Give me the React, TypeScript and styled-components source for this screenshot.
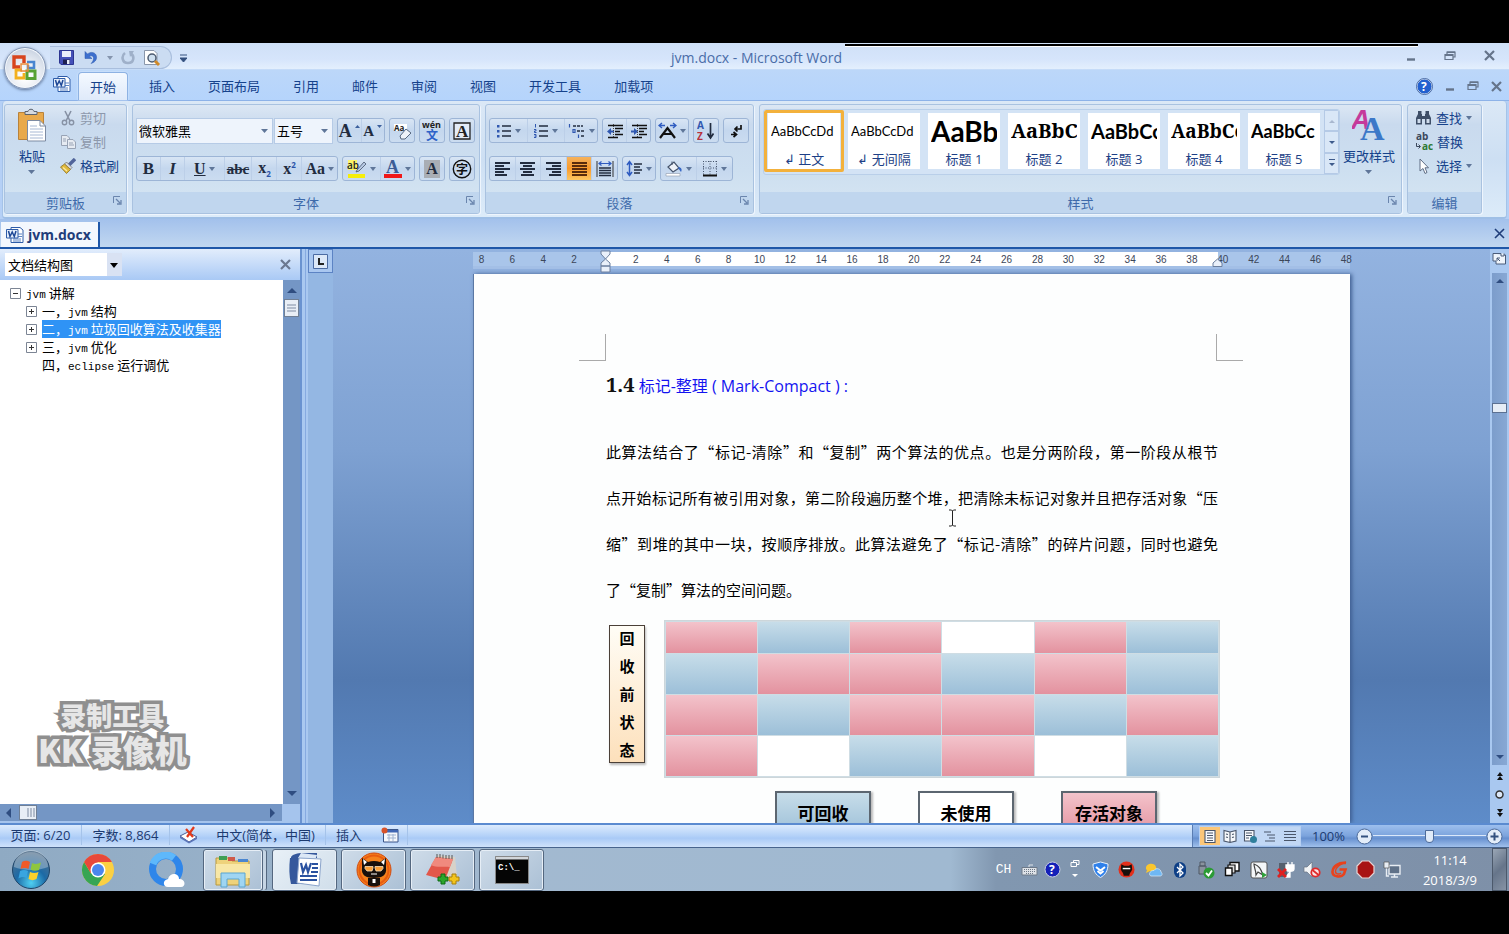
import React from 'react';
import styled, { createGlobalStyle, css } from 'styled-components';

const UI = `'Open Sans', 'Noto Sans CJK SC', sans-serif`;
const SERIF = `'Liberation Serif', 'Noto Sans CJK SC', serif`;

const GlobalStyle = createGlobalStyle`
  * { box-sizing: border-box; }
  body { margin: 0; background: #000; font: 13px/18px ${UI}; color: #15428b; }
  button, select, input { font: inherit; color: inherit; margin: 0; }
  button { border: 0; padding: 0; background: none; cursor: pointer; }
  svg { display: block; flex: none; }
  h1, p { margin: 0; }
`;

const Screen = styled.div`
  display: flex; flex-direction: column; height: 100vh; padding: 43px 0; overflow: hidden;
`;

/* ---------- title bar ---------- */
const TitleBar = styled.header`
  position: relative; display: flex; align-items: center; height: 27px; padding: 2px 10px 0 50px;
  background: linear-gradient(#cfe0f7, #d6e5fb 60%, #e3effd 95%, #b4d0f5);
`;
const TitleText = styled.div`
  flex: 1; text-align: center; color: #4a6da8; padding-right: 88px; font-size: 14px;
`;
const EdgeLine = styled.div`
  position: absolute; top: 1px; left: 56%; right: 6%; height: 3px; background: #000; border-bottom: 1px solid #fff;
`;
const QuickAccess = styled.div`
  display: flex; align-items: center; gap: 8px; width: 122px; height: 23px; padding-left: 8px;
  border: 1px solid #a9bedd; border-left: 0; border-radius: 0 12px 12px 0; background: #cbdcf2;
`;
const Customize = styled.button`margin: 0 8px;`;
const OfficeButton = styled.button`
  position: absolute; left: 4px; top: 4px; z-index: 3; width: 42px; height: 42px; border-radius: 50%;
  display: flex; align-items: center; justify-content: center;
  border: 1px solid #8496b4; background: radial-gradient(circle at 50% 70%, #fff 10%, #dfe5ee 55%, #b9c5d8);
  box-shadow: 0 1px 3px #5e7396, inset 0 0 0 1px #f4f8fd;
`;
const WindowButtons = styled.div`
  display: flex; align-items: center; gap: 28px; padding: 0 4px 4px 0; color: #65748a;
`;

/* ---------- ribbon ---------- */
const TabRow = styled.nav`
  display: flex; align-items: flex-end; gap: 9px; height: 31px; padding: 0 7px 0 53px;
  background: linear-gradient(#bcd7f9, #b5d4fc); border-bottom: 1px solid #8db2e8;
`;
const TabIcon = styled.div`align-self: center; width: 16px; padding-bottom: 2px;`;
const Tab = styled.button<{ $on?: boolean }>`
  height: 28px; padding: 0 12px; color: #15428b; border-radius: 4px 4px 0 0;
  ${p => p.$on && css`background: linear-gradient(#f4f9ff, #dfeafa); border: 1px solid #8db2e3; border-bottom: 0; padding: 0 11px; box-shadow: 0 0 2px #e7f2ff;`}
`;
const TabTools = styled.div`
  display: flex; align-items: center; gap: 12px; margin-left: auto; height: 28px; color: #65748a;
`;
const RibbonWrap = styled.div`padding: 0 2px; background: #b5d0f6;`;
const Ribbon = styled.section`
  display: flex; gap: 5px; height: 118px; padding: 3px 24px 3px 1px;
  background: linear-gradient(#dbe8f6, #cddff3 50%, #dcebf9);
  border: 1px solid #a5c3e8; border-top: 0; border-bottom: 2px solid #9fbfe6; border-radius: 4px;
`;
const Group = styled.div<{ $w?: number }>`
  display: flex; flex-direction: column; ${p => (p.$w ? css`width: ${p.$w}px;` : css`flex: 1;`)}
  min-width: 0; overflow: hidden;
  border: 1px solid #a9c2e0; border-radius: 3px; box-shadow: 1px 1px 0 #eef5fd;
  background: linear-gradient(#dce7f4, #c9daee 18%, #cddff0 60%, #d7e6f3);
`;
const GroupBody = styled.div`display: flex; flex: 1; padding: 0 3px;`;
const GroupLabel = styled.div<{ $plain?: boolean }>`
  display: flex; align-items: center; height: 21px; background: #c0d6ee; color: #3e6aaa;
  span { flex: 1; text-align: center; padding-left: ${p => (p.$plain ? 0 : 13)}px; }
  button { align-self: flex-start; margin: 4px 4px 0 0; }
`;
const BigButton = styled.button`
  display: flex; flex-direction: column; align-items: center; color: #15428b; padding-top: 3px; gap: 5px; white-space: nowrap; margin: 0 auto;
`;
const Stack = styled.div`display: flex; flex-direction: column; gap: 2px; padding: 2px 4px 0;`;
const LineButton = styled.button<{ $off?: boolean }>`
  display: flex; align-items: center; gap: 4px; height: 22px; color: ${p => (p.$off ? '#8d98ab' : '#15428b')}; white-space: nowrap;
`;
const ToolRows = styled.div`display: flex; flex-direction: column; gap: 13px; padding-top: 13px;`;
const ToolRow = styled.div`display: flex; align-items: center; gap: 4px; height: 25px;`;
const Cluster = styled.div<{ $w: number }>`
  display: flex; align-items: stretch; width: ${p => p.$w}px; height: 25px;
  border: 1px solid #9db5d6; border-radius: 3px; background: linear-gradient(#d8e5f4, #c4d7ee 50%, #cbdcf0);
`;
const Tool = styled.button<{ $on?: boolean; $g?: number }>`
  display: flex; align-items: center; justify-content: center; flex: ${p => p.$g ?? 1}; gap: 3px; min-width: 0; color: #222c3f;
  & + & { border-left: 1px solid #bccfe8; }
  ${p => p.$on && css`background: linear-gradient(#f5b25c, #f99a2c 50%, #fdc763);`}
`;
const Glyph = styled.span<{ $size?: number; $bold?: boolean; $italic?: boolean; $line?: string; $bg?: string }>`
  font: ${p => (p.$italic ? 'italic' : 'normal')} ${p => (p.$bold ? 700 : 400)} ${p => p.$size ?? 16}px/18px ${SERIF};
  text-decoration: ${p => p.$line ?? 'none'};
  ${p => p.$bg && css`background: ${p.$bg}; padding: 0 2px;`}
  sub, sup { font: 700 8px/8px ${UI}; color: #2a52a8; }
`;
const SelectWrap = styled.div<{ $w: number }>`
  position: relative; width: ${p => p.$w}px; height: 26px;
  select { appearance: none; width: 100%; height: 100%; padding: 0 2px; border: 1px solid #b6cbe6; background: #eef4fc; color: #000; }
  svg { position: absolute; right: 5px; top: 11px; pointer-events: none; }
`;
const Combos = styled.div`display: flex; gap: 1px;`;

const Gallery = styled.div`
  display: flex; height: 66px; margin: 4px 0 0; background: #d3e3f5; border: 1px solid #b9cfe9; border-radius: 3px; overflow: hidden;
`;
const StyleCell = styled.button<{ $on?: boolean }>`
  width: 80px; height: 62px; padding: 0 4px;
  ${p => p.$on && css`border: 3px solid #f3b13c; padding: 0 1px; border-radius: 2px;`}
`;
const StyleInner = styled.span`
  display: flex; flex-direction: column; justify-content: space-between; height: 56px; background: #fff; overflow: hidden;
`;
const Sample = styled.span<{ $size: number; $bold?: boolean; $serif?: boolean }>`
  display: block; margin: 0 3px; height: 36px; color: #000; white-space: nowrap; overflow: hidden; text-align: left;
  font: ${p => (p.$bold ? 700 : 400)} ${p => p.$size}px/36px ${p => (p.$serif ? `'Noto Serif', 'DejaVu Serif', ${SERIF}` : `Lato, ${UI}`)};
`;
const StyleName = styled.span`display: block; text-align: center; color: #1d3f86; line-height: 20px;`;
const GalleryScroll = styled.div`
  display: flex; flex-direction: column; width: 15px; margin-left: auto;
  button { flex: 1; display: flex; align-items: center; justify-content: center; border: 1px solid #b5cae6; background: #d9e7f7; }
`;

/* ---------- document tabs ---------- */
const DocTabs = styled.div`
  display: flex; align-items: flex-end; justify-content: space-between; height: 30px; padding: 0 4px 0 1px;
  background: linear-gradient(#a3c1ec, #c1d7f0); border-bottom: 2px solid #1f57a8;
`;
const DocTab = styled.button`
  display: flex; align-items: center; gap: 4px; height: 25px; padding: 0 7px 0 5px; background: #f3f7fd;
  border-right: 2px solid #1f57a8; color: #1f3d7a; font: 700 14px/18px ${UI};
`;
const DocClose = styled.button`align-self: center;`;

/* ---------- workspace ---------- */
const Workspace = styled.main`display: flex; flex: 1; min-height: 0;`;
const Pane = styled.aside`position: relative; display: flex; flex-direction: column; width: 300px; background: #fff;`;
const PaneHead = styled.div`
  display: flex; align-items: center; justify-content: space-between; height: 31px; padding: 0 9px 0 5px;
  background: linear-gradient(#e2edfc, #a9c9f5);
`;
const PaneSelect = styled.div`
  position: relative; width: 117px; height: 23px;
  select { appearance: none; width: 100%; height: 100%; border: 0; padding: 0 3px; background: linear-gradient(90deg, #fff 102px, #d9e2f3 102px); color: #000; }
  svg { position: absolute; right: 4px; top: 10px; pointer-events: none; }
`;
const PaneRow = styled.div`display: flex; flex: 1; min-height: 0;`;
const Tree = styled.ul`
  flex: 1; margin: 0; padding: 4px 0 0 10px; list-style: none; color: #000; white-space: nowrap;
  font: 13px/18px 'Noto Sans CJK SC', sans-serif;
`;
const TreeItem = styled.li<{ $level: number }>`
  display: flex; align-items: center; gap: 5px; height: 18px; padding-left: ${p => (p.$level ? 16 : 0)}px;
`;
const TreeText = styled.span<{ $on?: boolean; $leaf?: boolean }>`
  height: 18px;
  ${p => p.$on && css`background: #2f93f5; color: #fff;`}
  ${p => p.$leaf && css`margin-left: 16px;`}
  i { font: 11px/16px 'Liberation Mono', monospace; }
`;
const ScrollV = styled.div`
  display: flex; flex-direction: column; align-items: center; width: 17px; padding: 8px 0; background: #7496c5;
`;
const ScrollThumb = styled.div`
  width: 15px; height: 18px; margin: 6px 0 auto; border: 1px solid #6f7f95; background: #e8eef6;
  display: flex; align-items: center; justify-content: center;
`;
const ScrollH = styled.div`
  display: flex; align-items: center; gap: 8px; height: 17px; margin-right: 18px; padding: 0 7px 0 6px; background: #7496c5;
  svg:last-child { margin-left: auto; }
`;
const PaneFoot = styled.div`background: #a5c4ed; height: 19px;`;
const ThumbH = styled.div`
  width: 18px; height: 15px; border: 1px solid #6f7f95; background: #e8eef6; display: flex; align-items: center; justify-content: center;
`;
const Watermark = styled.div`
  position: absolute; left: 38px; bottom: 56px; text-align: center; color: #e6e6e6;
  font: 900 26px/32px 'Noto Sans CJK SC', sans-serif; -webkit-text-stroke: 7px #8f8f8f; paint-order: stroke fill;
  strong { display: block; font: 900 32px/36px 'Noto Sans CJK SC', sans-serif; }
`;
const Splitter = styled.div`
  width: 8px; background: linear-gradient(90deg, #6a93d0 0 2px, #a9c8f0 2px 5px, #86aae0 5px 6px, #a9c8f0 6px);
`;
const RulerV = styled.div`width: 25px; background: #94b7e3; `;
const TabStop = styled.button`
  width: 25px; height: 24px; border: 1px solid #5c83c4; background: #a9c7f0; display: flex; align-items: center; justify-content: center;
`;
const Canvas = styled.div`
  flex: 1; min-width: 0; display: flex; flex-direction: column; align-items: center; overflow: hidden;
  background: linear-gradient(#93b3e0, #7ea1d2 35%, #5279b0 75%, #5e8cc9);
`;
const Ruler = styled.div`
  position: relative; flex: none; display: flex; width: 877px; height: 17px; margin: 3px 0 5px;
  border-bottom: 3px solid #a3bfe6; background: #a9c5ea;
`;
const RulerLive = styled.div`flex: 1; margin: 0 132px; background: #fff;`;
const RulerNumbers = styled.div`
  position: absolute; left: -7px; right: -12px; top: 0; display: flex; font: 10px/16px 'Liberation Sans', sans-serif; color: #3c4658;
  span { flex: 1; text-align: center; }
`;
const Marker = styled.div<{ $right?: boolean }>`
  position: absolute; z-index: 1; top: ${p => (p.$right ? 6 : -2)}px; ${p => (p.$right ? 'right: 127px;' : 'left: 127px;')}
`;
const Page = styled.article`
  position: relative; flex: 1; min-height: 0; width: 877px; padding: 60px 126px 0 132px; background: #fdfefe; border-left: 1px solid #5b78a4;
  box-shadow: 2px 0 4px #3f5f92; overflow: hidden; color: #000;
`;
const Corner = styled.div<{ $right?: boolean }>`
  width: 27px; height: 27px; border-bottom: 1px solid #aaa; ${p => (p.$right ? 'border-left' : 'border-right')}: 1px solid #aaa;
`;
const Corners = styled.div`display: flex; justify-content: space-between; margin: 0 -19px 0 -27px;`;
const Heading = styled.h1`
  margin: 9px 0 29px; height: 30px; color: #1414f0; font: 400 16px/30px ${UI};
  b { font: 700 20px/30px 'Noto Serif', 'DejaVu Serif', 'Liberation Serif', serif; color: #111; }
`;
const Paragraph = styled.p`
  width: 612px; font: 15px/46px 'Noto Sans CJK SC', sans-serif; white-space: nowrap;
  span { display: block; text-align-last: justify; }
  span:last-child { text-align-last: start; }
`;
const Caret = styled.div`position: absolute; left: 474px; top: 235px;`;
const Figure = styled.div`display: flex; gap: 19px; align-items: flex-start; padding: 0 4px 0 3px; margin-top: 7px;`;
const SideLabel = styled.div`
  width: 36px; height: 138px; margin-top: 5px; border: 1px solid #4b4038; background: linear-gradient(#fffdf6, #fde0bb);
  display: grid; place-content: center;
  box-shadow: 1px 2px 2px #bbb; font: 700 15px/28px 'Noto Sans CJK SC', sans-serif; text-align: center;
`;
const Heap = styled.div`
  flex: 1; display: grid; grid-template-columns: repeat(6, 1fr); grid-template-rows: 31px 40px 40px 40px; gap: 1px; padding: 1px;
  border: 1px solid #cdd6da; background: #cfdde4;
`;
type Kind = 'r' | 'b' | 'w';
const fills: Record<Kind, string> = {
  r: 'linear-gradient(#f3c3cb, #e3929f)',
  b: 'linear-gradient(#c7dde9, #9cbfd8)',
  w: '#fff',
};
const HeapCell = styled.div<{ $k: Kind }>`background: ${p => fills[p.$k]};`;
const Legend = styled.div`display: flex; gap: 47px; padding-left: 169px; margin-top: 13px;`;
const LegendBox = styled.div<{ $k: Kind }>`
  width: 96px; height: 46px; border: 2px solid #5c6670; background: ${p => fills[p.$k]}; box-shadow: 2px 1px 2px #bbb;
  text-align: center; white-space: nowrap; font: 700 17px/40px 'Noto Sans CJK SC', sans-serif;
`;
const DocScroll = styled.div`
  display: flex; flex-direction: column; width: 19px; background: #a9c8f0; align-items: center;
`;
const DocTrack = styled.div`
  flex: 1; width: 15px; display: flex; flex-direction: column; align-items: center; background: linear-gradient(90deg, #7c9dcb, #88a8d4); padding: 6px 0;
`;
const DocThumb = styled.div`width: 15px; height: 10px; margin: 120px 0 auto; border: 1px solid #5c7192; background: #e6edf6;`;
const ToggleRuler = styled.button`height: 18px; margin-bottom: 6px;`;
const Browse = styled.div`display: flex; flex-direction: column; align-items: center; gap: 9px; padding: 7px 0 6px;`;

/* ---------- status bar ---------- */
const StatusBar = styled.footer`
  display: flex; height: 25px; color: #1c3a70; border-top: 2px solid #5b8bd0;
  background: linear-gradient(#dcebfd, #b3d1f8 50%, #a9caf6 60%, #cfe2fb); border-bottom: 1px solid #47648d;
`;
const StatusItem = styled.button<{ $w: number }>`
  display: flex; align-items: center; justify-content: center; width: ${p => p.$w}px; height: 20px; color: #1c3a70; white-space: nowrap;
  border-right: 1px solid #a5c3ea;
`;
const StatusPlain = styled(StatusItem)`border: 0;`;
const StatusRight = styled.div`
  display: flex; align-items: center; margin-left: auto; padding-left: 6px; gap: 11px; border-left: 1px solid #5a7db2;
  background: linear-gradient(#9dbfee, #7ba3dc 50%, #6690cf 60%, #a0c0ec);
`;
const Views = styled.div`display: flex; height: 20px; border: 1px solid #b7d0f2; background: #c1d7f4;`;
const ViewButton = styled.button<{ $on?: boolean }>`
  width: 20px; display: flex; align-items: center; justify-content: center; ${p => p.$on && css`background: #fbc678;`}
`;
const Zoom = styled.div`display: flex; align-items: center; padding-right: 6px;`;
const Slider = styled.input`
  appearance: none; width: 113px; height: 18px; background: linear-gradient(transparent 8px, #dbe8fa 8px 9px, transparent 9px);
  &::-webkit-slider-thumb { appearance: none; width: 9px; height: 13px; background: #dfeaf8; border: 1px solid #4d6b9a; border-radius: 1px 1px 5px 5px; }
`;

/* ---------- taskbar ---------- */
const TaskBar = styled.footer`
  display: flex; align-items: stretch; height: 43px; padding: 0 2px 0 4px; color: #fff;
  background: linear-gradient(90deg, #8faac3, #a2b9d0 35%, #a0b9d1 63%, #8197b0 66%, #7e90a8);
`;
const Pinned = styled.button<{ $w: number }>`width: ${p => p.$w}px; display: flex; align-items: center; justify-content: center;`;
const TaskTile = styled.button<{ $stack?: boolean; $hot?: boolean }>`
  width: ${p => (p.$stack ? 60 : 65)}px; margin: ${p => (p.$stack ? '1px 9px 0 7px' : '1px 4px 0 0')}; display: flex; align-items: center; justify-content: center;
  border: 1px solid #54677f; border-radius: 3px;
  background: ${p => (p.$hot ? 'linear-gradient(135deg, #e8f0f7, #d0deea)' : 'linear-gradient(135deg, #cfdce9, #abc0d5)')};
  box-shadow: inset 0 0 0 1px #e6eef6 ${p => (p.$stack ? ', 4px 0 0 -1px #c6d5e4, 5px 0 0 -1px #54677f' : '')};
`;
const Tray = styled.div`display: flex; align-items: center; margin-left: auto;`;
const TrayIcons = styled.div`display: flex; width: 318px; button { flex: 1; }`;
const TrayItem = styled.button<{ $w?: number }>`
  width: ${p => p.$w ?? 27}px; display: flex; justify-content: center; align-items: center; color: #fff; font: 13px/16px 'Liberation Mono', monospace;
`;
const Clock = styled.div`width: 82px; text-align: center; line-height: 20px; margin-left: 4px;`;
const ShowDesktop = styled.button`
  width: 15px; margin-left: 1px; border: 1px solid #4c596b; background: linear-gradient(135deg, #9aa6b5, #66758a 50%, #8693a5);
`;

/* ---------- icons ---------- */
type P = { w: number; h: number; children: React.ReactNode; vb?: string };
const Svg = ({ w, h, children, vb }: P) => (
  <svg width={w} height={h} viewBox={vb ?? `0 0 ${w} ${h}`} fill="none" aria-hidden="true">{children}</svg>
);
const Drop = ({ c = '#5f7699', w = 7, h = 4 }: { c?: string; w?: number; h?: number }) => (
  <Svg w={w} h={h}><path d={`M0 0H${w}L${w / 2} ${h}Z`} fill={c} /></Svg>
);
const Tri = ({ d, c = '#3e5b8c' }: { d: string; c?: string }) => <Svg w={10} h={10}><path d={d} fill={c} /></Svg>;
const CloseX = ({ s = 11, c = 'currentColor' }) => (
  <Svg w={s} h={s} vb="0 0 11 11"><path d="M1 1L10 10M10 1L1 10" stroke={c} strokeWidth="2.2" /></Svg>
);
const Minimize = () => <Svg w={10} h={10}><path d="M1 8.500H9" stroke="currentColor" strokeWidth="2.4" /></Svg>;
const Restore = () => (
  <Svg w={12} h={10}><path d="M3 3V1H11V6H9M1 3.500H9V8.500H1Z" stroke="currentColor" strokeWidth="1.2" /><path d="M1 3H9V5H1ZM3 0.500H11V2H3Z" fill="currentColor" /></Svg>
);
const Launcher = () => (
  <Svg w={9} h={9}><path d="M.5 7V.5H7" stroke="#6a85ad" /><path d="M3 3L7 7M8 4V8H4" stroke="#6a85ad" strokeWidth="1.3" /></Svg>
);
const WordDoc = () => (
  <Svg w={18} h={18}>
    <path d="M5 1.500H14L17 4V16.500H5Z" fill="#fff" stroke="#2e5ca8" /><path d="M12 8H16M12 10.500H16M7 13H15M7 15H15" stroke="#5a83c4" />
    <path d="M.5 3.500H12V12H.5Z" fill="#e6effb" stroke="#2e5ca8" /><path d="M2.500 5L4 10.500L6.200 6L8.300 10.500L10 5" stroke="#1d4796" strokeWidth="1.500" />
  </Svg>
);
const OfficeLogo = () => (
  <Svg w={28} h={28}>
    <path d="M13 9V3H3V13H9" stroke="#d8441c" strokeWidth="3.400" /><path d="M16 8H23V14H17V11" stroke="#4a86d0" strokeWidth="2.600" />
    <path d="M11 16H5V24H13V19" stroke="#f3b01e" strokeWidth="2.800" /><path d="M16 17H24V24.500H16Z" stroke="#58a234" strokeWidth="3" />
    <path d="M10 10H17V17H10Z" stroke="#e98b3a" strokeWidth="1.400" />
  </Svg>
);
const Save = () => (
  <Svg w={17} h={17}><path d="M1.500 1.500H15.500V15.500H3L1.500 14Z" fill="#4450b8" stroke="#2c3590" /><path d="M4 2H13V8H4Z" fill="#e9edfa" /><path d="M5 10.500H12V15H5Z" fill="#1e2050" /><path d="M9 11H11.500V15H9Z" fill="#e9edfa" /></Svg>
);
const Undo = () => (
  <Svg w={16} h={16}><path d="M2 1.500V8.500H9L6.500 6.200C9 5 11 6.500 10.500 9C10.300 10.500 9.500 12 8 13.500C11.500 12.500 14 10 13.500 6.500C13 2.500 8 1 4.500 4Z" fill="#3d6fce" stroke="#2b57ab" strokeWidth=".5" /></Svg>
);
const Redo = () => (
  <Svg w={14} h={15}><path d="M4 3C0 6 1 13 7 13C13 13 14 6 9.500 3.500" stroke="#9fb0c9" strokeWidth="2.600" /><path d="M8 1H13L9 7Z" fill="#9fb0c9" /></Svg>
);
const Preview = () => (
  <Svg w={18} h={18}><path d="M1.500 1.500H11L14 4.500V15.500H1.500Z" fill="#fff" stroke="#8a97ab" /><circle cx="9" cy="9" r="4" fill="#cfe0f0" stroke="#4c5b70" strokeWidth="1.500" /><path d="M12 12L16 16" stroke="#d08a2a" strokeWidth="3" /></Svg>
);
const Paste = () => (
  <Svg w={30} h={34}>
    <path d="M1.500 4.500H26.500V31.500H1.500Z" fill="#e9a94a" stroke="#b9823a" /><path d="M8 6.500V3.500H11C11.500.5 16.500.5 17 3.500H20V6.500Z" fill="#d5d9df" stroke="#5c6470" />
    <path d="M10.500 12.500H23L28.500 18V33H10.500Z" fill="#fff" stroke="#7d8ba3" /><path d="M23 12.500V18H28.500" stroke="#7d8ba3" /><path d="M13 18H20M13 21H26M13 24H26M13 27H26M13 30H26" stroke="#a7b8d4" />
  </Svg>
);
const Cut = () => <Svg w={16} h={16}><path d="M5 1L10 11M11 1L6 11" stroke="#8792a5" strokeWidth="1.600" /><circle cx="4.500" cy="12.500" r="2.200" stroke="#8792a5" strokeWidth="1.400" /><circle cx="11.500" cy="12.500" r="2.200" stroke="#8792a5" strokeWidth="1.400" /></Svg>;
const Copy = () => <Svg w={16} h={16}><path d="M1.500 1.500H7L9.500 4V11.500H1.500Z" fill="#e6ebf2" stroke="#98a3b5" /><path d="M7.500 5.500H13L15.500 8V14.500H7.500Z" fill="#e6ebf2" stroke="#98a3b5" /><path d="M3 5H6M3 7H6M9 9H13M9 11H14" stroke="#98a3b5" /></Svg>;
const Brush = () => <Svg w={16} h={16}><path d="M15 1L9 7" stroke="#51659a" strokeWidth="3.400" /><path d="M6.500 4L12 9.500L10 11.500L4.500 6Z" fill="#d7d9de" stroke="#666" strokeWidth=".7" /><path d="M4.500 6L10.500 11.500L6.500 15.500L.5 9Z" fill="#e0b93c" stroke="#8f7222" strokeWidth=".8" /><path d="M3 9.500L7 13" stroke="#fbe9a0" strokeWidth="1.400" /></Svg>;
const Eraser = () => (
  <Svg w={19} h={18}><path d="M1 2H14V9H1Z" fill="#fff" /><text x="1" y="9" fontSize="8" fontWeight="700" fill="#222" fontFamily="Open Sans">Aa</text><path d="M13 7L18 11L12 17H8L7 14Z" fill="#eef3fa" stroke="#56677f" /></Svg>
);
const Pinyin = () => (
  <Svg w={20} h={22}><text x="0" y="8" fontSize="9" fontWeight="700" fill="#222" fontFamily="Open Sans">wén</text><text x="4" y="20" fontSize="12" fontWeight="700" fill="#2e62c8" fontFamily="Noto Sans CJK SC">文</text></Svg>
);
const Bullets = () => <Svg w={16} h={16}><path d="M6 3H15M6 8H15M6 13H15" stroke="#222c3f" strokeWidth="1.500" /><path d="M1 2H3.500V4.500H1ZM1 7H3.500V9.500H1ZM1 12H3.500V14.500H1Z" fill="#3058b0" /></Svg>;
const Numbers = () => <Svg w={16} h={16}><path d="M6 3H15M6 8H15M6 13H15" stroke="#222c3f" strokeWidth="1.500" /><path d="M2.500 1V4.500M1 6.500H3V8H1.500V9.500H3.500M1 11.500H3V14.500H1M1.500 13H3" stroke="#3058b0" /></Svg>;
const Multi = () => <Svg w={18} h={16}><path d="M5 3H15M9 8H16M13 13H17" stroke="#222c3f" strokeWidth="1.500" strokeDasharray="3 1" /><path d="M1.500 1V4.500M5 6.500H7V9.500H5ZM10.500 11.500V15" stroke="#3058b0" strokeWidth="1.200" /></Svg>;
const Indent = ({ r }: { r?: boolean }) => (
  <Svg w={18} h={16}><path d="M2 2.500H17M9 5.500H17M9 8.500H14M9 11.500H17M2 14.500H12" stroke="#111" strokeWidth="1.700" /><path d={r ? 'M1 7.500H4V5L8 8.500L4 12V9.500H1Z' : 'M8 7.500H5V5L1 8.500L5 12V9.500H8Z'} fill="#3058b0" /><path d="M7.500 1V15" stroke="#444" strokeDasharray="1 1" /></Svg>
);
const AsianLayout = () => <Svg w={19} h={17}><path d="M2 16L9.500 6L17 16M5 12H14" stroke="#111" strokeWidth="2.200" /><path d="M1 3.500H7M12 3.500H18M4 1L1 3.500L4 6M15 1L18 3.500L15 6" stroke="#2e5bc0" strokeWidth="1.400" /></Svg>;
const Sort = () => <Svg w={18} h={20}><text x="0" y="8" fontSize="10" fontWeight="700" fill="#3058b0" fontFamily="Open Sans">A</text><text x="0" y="19" fontSize="10" fontWeight="700" fill="#b8323c" fontFamily="Open Sans">Z</text><path d="M13.500 2V16M10.500 12.500L13.500 17L16.500 12.500" stroke="#222c3f" strokeWidth="1.700" /></Svg>;
const Marks = () => <Svg w={15} h={16}><path d="M12 2V6H6M8.500 3.500L6 6L8.500 8.500M2 11.500H7M4.500 9L7.500 11.500L4.500 14" stroke="#111" strokeWidth="1.700" /></Svg>;
const aligns: Record<string, string> = {
  l: 'M1 2H16M1 5H10M1 8H16M1 11H10M1 14H13', c: 'M1 2H16M4 5H13M1 8H16M4 11H13M2 14H15',
  r: 'M1 2H16M7 5H16M1 8H16M7 11H16M4 14H16', j: 'M1 2H16M1 5H16M1 8H16M1 11H16M1 14H16',
};
const Align = ({ k }: { k: string }) => <Svg w={17} h={16}><path d={aligns[k]} stroke={k === 'j' ? '#5a2c0c' : '#222c3f'} strokeWidth="1.800" /></Svg>;
const Distribute = () => <Svg w={18} h={18}><path d="M1 1V17M17 1V17" stroke="#333" /><path d="M3 3.500H15M5.500 1.500L3 3.500L5.500 5.500M12.500 1.500L15 3.500L12.500 5.500" stroke="#2e5bc0" strokeWidth="1.200" /><path d="M3 8H15M3 10.500H15M3 13H15M3 15.500H15" stroke="#222c3f" strokeWidth="1.500" /></Svg>;
const Spacing = () => <Svg w={17} h={17}><path d="M3.500 2V15M1 5L3.500 1.500L6 5M1 12L3.500 15.500L6 12" stroke="#2e5bc0" strokeWidth="1.500" /><path d="M8 4H16M8 7H14M8 10H16M8 13H14" stroke="#222c3f" strokeWidth="1.500" /></Svg>;
const Bucket = () => <Svg w={18} h={17}><path d="M3 7L9 2L14 8L8 12Z" fill="#eef2f8" stroke="#44536b" strokeWidth="1.200" /><path d="M7 5V1.500" stroke="#44536b" /><path d="M14 7C17 8 17 10 16 12L13 8Z" fill="#3566c4" /><path d="M1 13.500H15V16H1Z" fill="#fff" stroke="#98a3b5" strokeWidth=".7" /></Svg>;
const Borders = () => <Svg w={16} h={17}><path d="M1.500 1V15M14.500 1V15M8 1V15M1 1.500H15M1 8H15" stroke="#44536b" strokeDasharray="1 1.500" /><path d="M1 15.500H15" stroke="#111" strokeWidth="2" /></Svg>;
const Highlighter = () => <Svg w={20} h={20}><path d="M1 1H10V11H1Z" fill="#fdf66a" /><text x="0" y="10" fontSize="10" fontWeight="600" fill="#222" fontFamily="Open Sans">ab</text><path d="M17 3L10 11L9 13L12 12L19 5Z" fill="#b7c9e3" stroke="#44536b" strokeWidth=".8" /><path d="M1 15H18V19H1Z" fill="#f6ee0a" /></Svg>;
const Enclosed = () => <Svg w={20} h={20}><circle cx="10" cy="10" r="8.700" stroke="#111" strokeWidth="1.400" /><text x="4" y="14.500" fontSize="12" fontWeight="700" fill="#111" fontFamily="Noto Sans CJK SC">字</text></Svg>;
const ChangeStyles = () => <Svg w={34} h={34}><text x="-1" y="21" fontSize="27" fontStyle="italic" fontWeight="700" fill="#c53a9b" fontFamily="Liberation Sans">A</text><text x="8" y="32" fontSize="34" fontWeight="700" fill="#3c78c8" fontFamily="Liberation Serif">A</text></Svg>;
const Binoculars = () => <Svg w={17} h={16}><path d="M3 1H6.500V4H3ZM10.500 1H14V4H10.500ZM1 8L3 4H7V14.500H1ZM16 8L14 4H10V14.500H16Z" fill="#3f4f68" /><path d="M7 6H10V9H7Z" fill="#3f4f68" /><path d="M2.500 9H5.500V13H2.500ZM11.500 9H14.500V13H11.500Z" fill="#cfdcec" /></Svg>;
const Replace = () => <Svg w={18} h={20}><text x="1" y="8" fontSize="10" fontWeight="700" fill="#3b485c" fontFamily="Open Sans">ab</text><text x="7" y="18" fontSize="10" fontWeight="700" fill="#2e7a34" fontFamily="Open Sans">ac</text><path d="M1.500 11V14.500H5M3.500 12.500L5.500 14.500L3.500 16.500" stroke="#3b485c" /></Svg>;
const Arrow = () => <Svg w={17} h={17}><path d="M5 1V13L8 10.500L10 15.500L12 14.500L10 9.800H13.500Z" fill="#fff" stroke="#5e6d85" /></Svg>;
const Expander = ({ open }: { open?: boolean }) => <Svg w={11} h={11}><path d="M.5.5H10.500V10.500H.5Z" fill="#fff" stroke="#7c8594" /><path d={open ? 'M3 5.500H8' : 'M3 5.500H8M5.500 3V8'} stroke="#333" /></Svg>;
const Help = ({ s = 17 }) => <Svg w={s} h={s} vb="0 0 17 17"><circle cx="8.500" cy="8.500" r="7.500" fill="#2260cf" stroke="#d6e4f8" /><circle cx="8.500" cy="8.500" r="8" stroke="#4b6ba3" /><text x="5" y="13" fontSize="12" fontWeight="700" fill="#fff" fontFamily="Open Sans">?</text></Svg>;

/* ---------- data ---------- */
const tabs = ['开始', '插入', '页面布局', '引用', '邮件', '审阅', '视图', '开发工具', '加载项'];
const styleList: [string, string, number, boolean, boolean][] = [
  ['AaBbCcDd', '↲ 正文', 13, false, false], ['AaBbCcDd', '↲ 无间隔', 13, false, false], ['AaBb', '标题 1', 28, true, false],
  ['AaBbC', '标题 2', 20, true, true], ['AaBbCc', '标题 3', 20, true, false], ['AaBbCc', '标题 4', 19, true, true], ['AaBbCc', '标题 5', 18, true, false],
];
const tree = [
  { l: 0, a: '', m: 'jvm', b: ' 讲解', open: true },
  { l: 1, a: '一，', m: 'jvm', b: ' 结构' },
  { l: 1, a: '二，', m: 'jvm', b: ' 垃圾回收算法及收集器', on: true },
  { l: 1, a: '三，', m: 'jvm', b: ' 优化' },
  { l: 1, a: '四，', m: 'eclipse', b: ' 运行调优', leaf: true },
];
const rulerNumbers = [8, 6, 4, 2, '', ...Array.from({ length: 24 }, (_, i) => (i + 1) * 2)];
const heap = 'rbrwrb' + 'brrbrb' + 'rbrrbr' + 'rwbrwb';

const GroupFoot = ({ t, plain }: { t: string; plain?: boolean }) => (
  <GroupLabel $plain={plain}><span>{t}</span>{!plain && <button aria-label={`${t}设置`}><Launcher /></button>}</GroupLabel>
);

const RibbonBar = () => (
  <RibbonWrap>
    <Ribbon>
      <Group $w={123}>
        <GroupBody>
          <BigButton><Paste />粘贴<Drop /></BigButton>
          <Stack>
            <LineButton $off><Cut />剪切</LineButton>
            <LineButton $off><Copy />复制</LineButton>
            <LineButton><Brush />格式刷</LineButton>
          </Stack>
        </GroupBody>
        <GroupFoot t="剪贴板" />
      </Group>
      <Group $w={348}>
        <GroupBody>
          <ToolRows>
            <ToolRow>
              <Combos>
                <SelectWrap $w={137}><select aria-label="字体"><option>微软雅黑</option></select><Drop /></SelectWrap>
                <SelectWrap $w={59}><select aria-label="字号"><option>五号</option></select><Drop /></SelectWrap>
              </Combos>
              <Cluster $w={48}>
                <Tool aria-label="增大字体"><Glyph $bold $size={18}>A</Glyph><Svg w={5} h={12}><path d="M0 3L2.500 0L5 3Z" fill="#3b5f9c" /></Svg></Tool>
                <Tool aria-label="缩小字体"><Glyph $bold $size={15}>A</Glyph><Svg w={5} h={12}><path d="M0 0L2.500 3L5 0Z" fill="#3b5f9c" /></Svg></Tool>
              </Cluster>
              <Cluster $w={26}><Tool aria-label="清除格式"><Eraser /></Tool></Cluster>
              <Cluster $w={26}><Tool aria-label="拼音指南"><Pinyin /></Tool></Cluster>
              <Cluster $w={26}><Tool aria-label="字符边框"><Svg w={18} h={18}><path d="M1 1H17V17H1Z" fill="#e3ebf6" stroke="#222" strokeWidth="1.300" /><text x="3" y="15" fontSize="17" fontWeight="700" fill="#222" fontFamily="Liberation Serif">A</text></Svg></Tool></Cluster>
            </ToolRow>
            <ToolRow>
              <Cluster $w={202}>
                <Tool $g={24}><Glyph $bold $size={17}>B</Glyph></Tool>
                <Tool $g={24}><Glyph $bold $italic $size={17}>I</Glyph></Tool>
                <Tool $g={40}><Glyph $bold $line="underline">U</Glyph><Drop w={6} /></Tool>
                <Tool $g={28}><Glyph $bold $size={15} $line="line-through">abc</Glyph></Tool>
                <Tool $g={25}><Glyph $bold>x<sub>2</sub></Glyph></Tool>
                <Tool $g={25}><Glyph $bold>x<sup>2</sup></Glyph></Tool>
                <Tool $g={36}><Glyph $bold>Aa</Glyph><Drop w={6} /></Tool>
              </Cluster>
              <Cluster $w={73}>
                <Tool $g={39}><Highlighter /><Drop w={6} /></Tool>
                <Tool $g={35}><Svg w={18} h={20}><text x="2" y="14" fontSize="18" fontWeight="700" fill="#3c5c96" fontFamily="Liberation Serif">A</text><path d="M0 15H18V19H0Z" fill="#f01818" /></Svg><Drop w={6} /></Tool>
              </Cluster>
              <Cluster $w={26}><Tool aria-label="字符底纹"><Glyph $bold $bg="#a9aeb5">A</Glyph></Tool></Cluster>
              <Cluster $w={26}><Tool aria-label="带圈字符"><Enclosed /></Tool></Cluster>
            </ToolRow>
          </ToolRows>
        </GroupBody>
        <GroupFoot t="字体" />
      </Group>
      <Group $w={269}>
        <GroupBody>
          <ToolRows>
            <ToolRow>
              <Cluster $w={109}>
                <Tool $g={38} aria-label="项目符号"><Bullets /><Drop w={6} /></Tool>
                <Tool $g={38} aria-label="编号"><Numbers /><Drop w={6} /></Tool>
                <Tool $g={33} aria-label="多级列表"><Multi /><Drop w={6} /></Tool>
              </Cluster>
              <Cluster $w={49}><Tool aria-label="减少缩进"><Indent /></Tool><Tool aria-label="增加缩进"><Indent r /></Tool></Cluster>
              <Cluster $w={34}><Tool aria-label="中文版式"><AsianLayout /><Drop w={6} /></Tool></Cluster>
              <Cluster $w={26}><Tool aria-label="排序"><Sort /></Tool></Cluster>
              <Cluster $w={26}><Tool aria-label="显示标记"><Marks /></Tool></Cluster>
            </ToolRow>
            <ToolRow>
              <Cluster $w={129}>
                <Tool aria-label="左对齐"><Align k="l" /></Tool><Tool aria-label="居中"><Align k="c" /></Tool><Tool aria-label="右对齐"><Align k="r" /></Tool>
                <Tool $on aria-label="两端对齐"><Align k="j" /></Tool><Tool aria-label="分散对齐"><Distribute /></Tool>
              </Cluster>
              <Cluster $w={34}><Tool aria-label="行距"><Spacing /><Drop w={6} /></Tool></Cluster>
              <Cluster $w={73}><Tool aria-label="底纹"><Bucket /><Drop w={6} /></Tool><Tool aria-label="边框"><Borders /><Drop w={6} /></Tool></Cluster>
            </ToolRow>
          </ToolRows>
        </GroupBody>
        <GroupFoot t="段落" />
      </Group>
      <Group>
        <GroupBody>
          <Gallery>
            {styleList.map(([s, n, size, bold, serif], i) => (
              <StyleCell key={n} $on={i === 0}>
                <StyleInner>
                  <Sample $size={size} $bold={bold} $serif={serif}>{s}</Sample>
                  <StyleName>{n}</StyleName>
                </StyleInner>
              </StyleCell>
            ))}
            <GalleryScroll>
              <button aria-label="向上"><Tri d="M2 7L5 4L8 7Z" c="#a9b8cf" /></button>
              <button aria-label="向下"><Tri d="M2 4L5 7L8 4Z" /></button>
              <button aria-label="更多"><Tri d="M2 1H8V2H2ZM2 5L5 8L8 5Z" /></button>
            </GalleryScroll>
          </Gallery>
          <BigButton><ChangeStyles />更改样式<Drop /></BigButton>
        </GroupBody>
        <GroupFoot t="样式" />
      </Group>
      <Group $w={75}>
        <GroupBody>
          <Stack>
            <LineButton><Binoculars />查找<Drop w={6} /></LineButton>
            <LineButton><Replace />替换</LineButton>
            <LineButton><Arrow />选择<Drop w={6} /></LineButton>
          </Stack>
        </GroupBody>
        <GroupFoot t="编辑" plain />
      </Group>
    </Ribbon>
  </RibbonWrap>
);

const NavPane = () => (
  <Pane>
    <PaneHead>
      <PaneSelect><select aria-label="窗格"><option>文档结构图</option></select><Drop c="#000" w={8} h={5} /></PaneSelect>
      <button aria-label="关闭窗格"><CloseX c="#6b7890" /></button>
    </PaneHead>
    <PaneRow>
      <Tree>
        {tree.map((t, i) => (
          <TreeItem key={i} $level={t.l}>
            {!t.leaf && <Expander open={t.open} />}
            <TreeText $on={t.on} $leaf={t.leaf}>{t.a}<i>{t.m}</i>{t.b}</TreeText>
          </TreeItem>
        ))}
      </Tree>
      <ScrollV>
        <Svg w={10} h={5}><path d="M0 5L5 0L10 5Z" fill="#2f4d80" /></Svg>
        <ScrollThumb><Svg w={9} h={9}><path d="M0 1H9M0 4H9M0 7H9" stroke="#7e8ca3" /></Svg></ScrollThumb>
        <Svg w={10} h={5}><path d="M0 0L5 5L10 0Z" fill="#2f4d80" /></Svg>
      </ScrollV>
    </PaneRow>
    <PaneFoot>
      <ScrollH>
        <Svg w={5} h={10}><path d="M5 0L0 5L5 10Z" fill="#2f4d80" /></Svg>
        <ThumbH><Svg w={9} h={9}><path d="M1 0V9M4 0V9M7 0V9" stroke="#7e8ca3" /></Svg></ThumbH>
        <Svg w={5} h={10}><path d="M0 0L5 5L0 10Z" fill="#2f4d80" /></Svg>
      </ScrollH>
    </PaneFoot>
    <Watermark>录制工具<strong>KK 录像机</strong></Watermark>
  </Pane>
);

const Document = () => (
  <Canvas>
    <Ruler>
      <RulerLive />
      <RulerNumbers>{rulerNumbers.map((n, i) => <span key={i}>{n}</span>)}</RulerNumbers>
      <Marker><Svg w={11} h={23}><path d="M1 1H10V4L5.500 9L1 4ZM5.500 9L10 13V16H1V13ZM1 16H10V22H1Z" fill="#e9f0fa" stroke="#6b7f9e" /></Svg></Marker>
      <Marker $right><Svg w={11} h={9}><path d="M5.500 1L10 5V8.500H1V5Z" fill="#e9f0fa" stroke="#6b7f9e" /></Svg></Marker>
    </Ruler>
    <Page>
      <Corners><Corner /><Corner $right /></Corners>
      <Heading><b>1.4</b> 标记-整理 ( Mark-Compact ) :</Heading>
      <Paragraph lang="zh-CN">
        <span>此算法结合了“标记-清除”和“复制”两个算法的优点。也是分两阶段，第一阶段从根节</span>
        <span>点开始标记所有被引用对象，第二阶段遍历整个堆，把清除未标记对象并且把存活对象“压</span>
        <span>缩”到堆的其中一块，按顺序排放。此算法避免了“标记-清除”的碎片问题，同时也避免</span>
        <span>了“复制”算法的空间问题。</span>
      </Paragraph>
      <Figure>
        <SideLabel>回<br />收<br />前<br />状<br />态</SideLabel>
        <Heap>{heap.split('').map((k, i) => <HeapCell key={i} $k={k as Kind} />)}</Heap>
      </Figure>
      <Legend>
        <LegendBox $k="b">可回收</LegendBox><LegendBox $k="w">未使用</LegendBox><LegendBox $k="r">存活对象</LegendBox>
      </Legend>
      <Caret><Svg w={9} h={18}><path d="M1 1H3.500L4.500 2L5.500 1H8M4.500 2V16M1 17H3.500L4.500 16L5.500 17H8" stroke="#222" /></Svg></Caret>
    </Page>
  </Canvas>
);

const StartOrb = () => (
  <Svg w={40} h={40}>
    <defs><radialGradient id="orb" cx=".5" cy=".85" r=".8"><stop offset="0" stopColor="#4fd0f2" /><stop offset=".5" stopColor="#1c6aa6" /><stop offset="1" stopColor="#52718f" /></radialGradient></defs>
    <circle cx="20" cy="20" r="18.500" fill="url(#orb)" stroke="#1e4468" /><path d="M3 17A17 17 0 0 1 37 17C28 21 12 21 3 17Z" fill="#fff" opacity=".3" />
    <path d="M11 12C14 10 17 11 19 12L17.500 19C15 17.500 12 18 9.500 19Z" fill="#ef5a28" /><path d="M21 13C24 14.500 27 14 30 12.500L28 20C25 21 22 21 19.500 19.500Z" fill="#8fc63f" />
    <path d="M9 21C12 19.500 15 20 17 21L15.500 28C13 26.500 10 27 7.500 28.500Z" fill="#39a5e0" /><path d="M19 22C22 23.500 25 23 27.500 22L25.500 29C23 30.500 20 30.500 17.500 29Z" fill="#fcd12a" />
  </Svg>
);
const Chrome = () => (
  <Svg w={34} h={34}>
    <circle cx="17" cy="17" r="16" fill="#fbd043" />
    <path d="M3.100 9A16 16 0 0 0 16 33L24 21L17 17L10 20.500Z" fill="#36a554" /><path d="M3.100 9L10 20.500L17 9H30.900A16 16 0 0 0 3.100 9Z" fill="#e8483a" />
    <circle cx="17" cy="17" r="7.500" fill="#fff" /><circle cx="17" cy="17" r="6" fill="#4b86ee" />
  </Svg>
);
const QQBrowser = () => (
  <Svg w={38} h={36}><circle cx="18" cy="17" r="13.500" stroke="#2f86ea" strokeWidth="7" /><path d="M5 12A13.500 13.500 0 0 1 26 6" stroke="#5eb8fb" strokeWidth="7" /><path d="M20 35C15 35 14 28 20 27C22 20 31 21 31 27C38 27 38 35 33 35Z" fill="#fff" /></Svg>
);
const Explorer = () => (
  <Svg w={38} h={36}><path d="M2 6H16L18 9H35V33H2Z" fill="#eed27b" stroke="#b7983e" /><path d="M5 4H13V8H5Z" fill="#3f9f55" /><path d="M14 5H21V9H14Z" fill="#cf5a4a" /><path d="M24 7H34V10H24Z" fill="#4a86d0" /><path d="M2 12H36V26H2Z" fill="#f8e7a6" /><path d="M7 35V21H31V35H25V27H13V35Z" fill="#9fd5f2" stroke="#5ba5d0" /></Svg>
);
const WordTask = () => (
  <Svg w={34} h={36}><path d="M3 5C5 2 10 1 14 1H29V6H3ZM2 6C1 15 1 24 3 32H20L17 6Z" fill="#35589c" /><path d="M13 1L29 3L27 8L10 6Z" fill="#dce8f6" /><path d="M11 6L33 7L31 34L9 31Z" fill="#fff" stroke="#8ba4cb" /><path d="M13 11L15 20L18 13L20 20L23 11" stroke="#2a52a0" strokeWidth="2.200" /><path d="M24 12H30M24 16H30M23 20H30M12 24H29M12 28H29" stroke="#2a52a0" strokeWidth="2" /></Svg>
);
const Cat = () => (
  <Svg w={36} h={36}>
    <circle cx="18" cy="18" r="17" fill="#f5821c" stroke="#d2470e" /><circle cx="18" cy="18" r="14.500" stroke="#e85c10" strokeWidth="2" />
    <path d="M6 6L12 10C16 8.500 20 8.500 24 10L30 6L30 16C31 23 26 26 18 26S5 23 6 16Z" fill="#17100c" />
    <path d="M7 7L11 10L8 13ZM29 7L25 10L28 13Z" fill="#fff" />
    <path d="M9 14.500H17V16L16 19H11L9 16.500ZM19 14.500H27V16.500L25 19H20L19 16Z" fill="#f9a03a" stroke="#fbe0b8" strokeWidth=".8" />
    <path d="M12 26H24V33C20 35 16 35 12 33Z" fill="#17100c" /><path d="M16.500 27H19.500V31H16.500Z" fill="#fff" /><path d="M15 22H21" stroke="#fff" />
  </Svg>
);
const Notes = () => (
  <Svg w={36} h={36}><path d="M12 3L30 5L32 25L22 27Z" fill="#d8d2c8" /><path d="M11 5L28 7L20 28L1 23Z" fill="#e2574a" /><path d="M11 5L28 7L25 15C18 14 12 16 6 13Z" fill="#f08a7e" /><path d="M12 2V6M15 2V6M18 2.500V6.500M21 3V7M24 3V7M27 3V7" stroke="#555" /><path d="M13 25H16V22H20V25H23V29H20V32H16V29H13Z" fill="#2ba52b" stroke="#0d6a14" /><path d="M24 25H27V22H31V25H34V29H31V32H27V29H24Z" fill="#f3c41b" stroke="#a8800a" /></Svg>
);
const Console = () => (
  <Svg w={34} h={28}><path d="M.5.5H33.500V27.500H.5Z" fill="#050505" stroke="#888" /><path d="M1 1H33V3.500H1Z" fill="#d2d6da" /><text x="3" y="14" fontSize="9" fontWeight="700" fill="#fff" fontFamily="Liberation Mono">C:\_</text></Svg>
);

const trayIcons: React.ReactNode[] = [
  <Svg w={17} h={17}><path d="M8.500 1L16 3C16 10 13 14 8.500 16.500C4 14 1 10 1 3Z" fill="#2f80ea" stroke="#e9f2fc" /><path d="M4 6L8.500 9.500L13 6M5.500 10L8.500 12.500L11.500 10" stroke="#fff" strokeWidth="2" /></Svg>,
  <Svg w={17} h={17} vb="0 0 36 36"><circle cx="18" cy="18" r="17" fill="#e3301c" /><path d="M7 7L13 10H23L29 7L30 18C28 24 24 25 24 31H12C12 25 8 24 6 18Z" fill="#17100c" /><path d="M10 16H26" stroke="#fff" strokeWidth="3" /></Svg>,
  <Svg w={19} h={17}><path d="M2 8C1 2 11 1 12 6C14 10 4 12 2 8Z" fill="#fbc72e" /><path d="M3 9L2 12L6 10Z" fill="#fbc72e" /><path d="M7 15C4 14 6 9 10 9.500C12 6 17 8 17 11C19 13 18 15 16 15Z" fill="#6fb8f4" stroke="#d9ecfb" strokeWidth=".7" /></Svg>,
  <Svg w={14} h={18}><rect x="1" y="1" width="12" height="16" rx="6" fill="#0e3f86" /><path d="M4 6L10 12L7 15V3L10 6L4 12" stroke="#fff" strokeWidth="1.300" /></Svg>,
  <Svg w={18} h={18}><path d="M3 1H8V5H3ZM2 5H9V13H2Z" fill="#8a939e" stroke="#4f5864" /><circle cx="12" cy="12" r="5.500" fill="#2b9b35" /><path d="M9 12L11.500 14.500L15 9.500" stroke="#fff" strokeWidth="1.800" /></Svg>,
  <Svg w={17} h={17}><path d="M6 1.500H15V10H6Z" fill="#fff" stroke="#111" strokeWidth="1.400" /><path d="M4 4H11V12H4Z" fill="#ddd" stroke="#111" strokeWidth="1.200" /><path d="M1.500 7H8V14.500H1.500Z" fill="#fff" stroke="#111" strokeWidth="1.400" /></Svg>,
  <Svg w={18} h={18}><rect x="1" y="1" width="16" height="16" rx="2" fill="#f4f6f8" stroke="#555" /><path d="M4 3C10 5 11 9 13 14L8 11L6 14C6 9 4 7 4 3Z" stroke="#444" strokeWidth="1.200" /><path d="M12 11L17 14L12 17Z" fill="#2fa03a" /></Svg>,
  <Svg w={18} h={18}><path d="M2 2H10V16H2Z" fill="#55606e" /><path d="M11 1V4M15 1V4M9 4H17V8C17 11 9 11 9 8ZM13 10V16H8" fill="#fff" stroke="#fff" strokeWidth="1.300" /><path d="M1 8L9 16M9 8L1 16" stroke="#e02020" strokeWidth="2.800" /></Svg>,
  <Svg w={18} h={17}><path d="M1 6H4L9 1V16L4 11H1Z" fill="#f2f4f6" stroke="#6a7482" strokeWidth=".7" /><circle cx="12.500" cy="11.500" r="4.200" fill="#fbe5e5" stroke="#e02b2b" strokeWidth="1.800" /><path d="M9.500 9L15.500 14" stroke="#e02b2b" strokeWidth="1.700" /></Svg>,
  <Svg w={18} h={17}><path d="M16 2C9 1 3 5 2.500 10.500C2 16 11 17 14 13L15.500 8.500H9.500" stroke="#e8421c" strokeWidth="2.600" /><path d="M16 1C10 3 6 6 5.500 10C5 13 9 14 11 12" stroke="#e8421c" strokeWidth="1.400" /></Svg>,
  <Svg w={19} h={19}><path d="M6 1H13L18 6V13L13 18H6L1 13V6Z" fill="#a81414" stroke="#e6d6d6" strokeWidth="1.200" /></Svg>,
  <Svg w={18} h={18}><path d="M6 4.500H17V13H6Z" fill="#5f7188" stroke="#e8edf3" strokeWidth="1.400" /><path d="M8 16H15M11.500 13V16M3.500 6V15H6" stroke="#e8edf3" strokeWidth="1.400" /><path d="M1 1H6V7H1Z" fill="#e8edf3" stroke="#555" strokeWidth=".7" /></Svg>,
];

const viewIcons = [
  'M2 1.500H12V13.500H2ZM4 4H10M4 6.500H10M4 9H10M4 11.500H10', 'M7 3L1 1.500V12L7 13.500L13 12V1.500ZM7 3V13M3 5L5 5.500M3 8L5 8.500M9 5.500L11 5M9 8.500L11 8',
  'M1.500 1.500H11V12H1.500ZM3 4H9M3 6.500H9M3 9H6', 'M1 3H8M4 6H12M6 9H12M2 12H12', 'M1 2.500H13M1 5.500H13M1 8.500H13M1 11.500H13',
];

export default function App() {
  return (
    <>
      <GlobalStyle />
      <Screen>
        <TitleBar>
          <OfficeButton aria-label="Office 按钮"><OfficeLogo /></OfficeButton>
          <QuickAccess>
            <button aria-label="保存"><Save /></button>
            <button aria-label="撤消"><Undo /></button>
            <Drop c="#8595ae" w={6} />
            <button aria-label="重复"><Redo /></button>
            <button aria-label="打印预览"><Preview /></button>
          </QuickAccess>
          <Customize aria-label="自定义"><Svg w={7} h={8}><path d="M0 1H7M0 4L3.500 8L7 4Z" fill="#34507f" stroke="#34507f" strokeWidth="1" /></Svg></Customize>
          <TitleText>jvm.docx - Microsoft Word</TitleText>
          <WindowButtons>
            <button aria-label="最小化"><Minimize /></button><button aria-label="还原"><Restore /></button><button aria-label="关闭"><CloseX /></button>
          </WindowButtons>
          <EdgeLine />
        </TitleBar>
        <TabRow>
          <TabIcon><WordDoc /></TabIcon>
          {tabs.map((t, i) => <Tab key={t} $on={i === 0}>{t}</Tab>)}
          <TabTools>
            <button aria-label="帮助"><Help /></button>
            <button aria-label="最小化文档"><Minimize /></button><button aria-label="还原文档"><Restore /></button><button aria-label="关闭文档"><CloseX /></button>
          </TabTools>
        </TabRow>
        <RibbonBar />
        <DocTabs>
          <DocTab><WordDoc />jvm.docx</DocTab>
          <DocClose aria-label="关闭标签"><Svg w={11} h={11}><path d="M1 1L10 10M10 1L1 10" stroke="#1f3d7a" strokeWidth="1.600" /></Svg></DocClose>
        </DocTabs>
        <Workspace>
          <NavPane />
          <Splitter />
          <RulerV><TabStop aria-label="制表符"><Svg w={15} h={15}><path d="M.5.5H14.500V14.500H.5Z" fill="#dce8f8" stroke="#4b6ba3" /><path d="M6 4V10H11" stroke="#222" strokeWidth="2" /></Svg></TabStop></RulerV>
          <Document />
          <DocScroll>
            <ToggleRuler aria-label="标尺"><Svg w={15} h={13}><path d="M1 1.500H9V4H12V1.500M1 1.500V9H4V12H13.500V3H12" fill="#eef4fb" stroke="#4a5c7a" /><path d="M5 6L8 9M5 9V6H8" stroke="#4a5c7a" /></Svg></ToggleRuler>
            <DocTrack>
              <Svg w={8} h={4}><path d="M0 4L4 0L8 4Z" fill="#2f4d80" /></Svg>
              <DocThumb />
              <Svg w={8} h={4}><path d="M0 0L4 4L8 0Z" fill="#2f4d80" /></Svg>
            </DocTrack>
            <Browse>
              <button aria-label="上一页"><Svg w={8} h={9}><path d="M4 0L7 4H1ZM4 4L7 8H1Z" fill="#111" /></Svg></button>
              <button aria-label="浏览对象"><Svg w={9} h={9}><circle cx="4.500" cy="4.500" r="3.500" fill="#dce8f8" stroke="#333" strokeWidth="1.500" /></Svg></button>
              <button aria-label="下一页"><Svg w={8} h={9}><path d="M4 5L7 1H1ZM4 9L7 5H1Z" fill="#111" /></Svg></button>
            </Browse>
          </DocScroll>
        </Workspace>
        <StatusBar>
          <StatusItem $w={82}>页面: 6/20</StatusItem>
          <StatusItem $w={88}>字数: 8,864</StatusItem>
          <StatusPlain $w={36} aria-label="校对"><Svg w={19} h={18}><path d="M1 10L9 6L18 11L10 16Z" fill="#fff" stroke="#4b5f95" /><path d="M1 10V12L10 17.500L18 13V11L10 16Z" fill="#5a74b8" /><path d="M7 3L14 11M15 1L8 11" stroke="#e2391c" strokeWidth="2.200" /></Svg></StatusPlain>
          <StatusItem $w={120}>中文(简体，中国)</StatusItem>
          <StatusPlain $w={46}>插入</StatusPlain>
          <StatusItem $w={36} aria-label="宏"><Svg w={18} h={16}><path d="M2.500 2.500H17V15H2.500Z" fill="#f5f8fc" stroke="#3a5588" /><path d="M3 3H17V5.500H3Z" fill="#3f66b4" /><path d="M6 8H15M6 11H15M8 7V14M12 7V14" stroke="#9fb3d2" /><circle cx="3.500" cy="3.500" r="3" fill="#d8532a" /></Svg></StatusItem>
          <StatusRight>
            <Views>
              {viewIcons.map((d, i) => <ViewButton key={d} $on={i === 0} aria-label={`视图 ${i + 1}`}><Svg w={14} h={15}><path d={d} stroke="#4a566a" strokeWidth="1.100" fill={i < 3 ? '#f6f8fb' : 'none'} />{i === 2 && <circle cx="10.500" cy="10.500" r="3.500" fill="#2f7f9c" />}</Svg></ViewButton>)}
            </Views>
            <span>100%</span>
            <Zoom>
              <button aria-label="缩小"><Svg w={17} h={17}><circle cx="8.500" cy="8.500" r="7.500" fill="#e3edf9" stroke="#4d6b9a" /><path d="M5 8.500H12" stroke="#33517f" strokeWidth="2" /></Svg></button>
              <Slider type="range" aria-label="显示比例" defaultValue={50} />
              <button aria-label="放大"><Svg w={17} h={17}><circle cx="8.500" cy="8.500" r="7.500" fill="#e3edf9" stroke="#4d6b9a" /><path d="M4.500 8.500H12.500M8.500 4.500V12.500" stroke="#33517f" strokeWidth="2" /></Svg></button>
            </Zoom>
          </StatusRight>
        </StatusBar>
        <TaskBar>
          <Pinned $w={53} aria-label="开始菜单"><StartOrb /></Pinned>
          <Pinned $w={81} aria-label="Chrome"><Chrome /></Pinned>
          <Pinned $w={58} aria-label="QQ浏览器"><QQBrowser /></Pinned>
          <TaskTile $stack aria-label="资源管理器"><Explorer /></TaskTile>
          <TaskTile $hot aria-label="Word"><WordTask /></TaskTile>
          <TaskTile aria-label="KK录像机"><Cat /></TaskTile>
          <TaskTile aria-label="笔记"><Notes /></TaskTile>
          <TaskTile aria-label="命令提示符"><Console /></TaskTile>
          <Tray>
            <TrayItem>CH</TrayItem>
            <TrayItem $w={24} aria-label="键盘"><Svg w={17} h={12}><path d="M1 3.500H16V11H1Z" fill="#dfe3e8" stroke="#6e7a89" /><path d="M3 5.500H15M3 7.500H15M5 9.500H12" stroke="#6e7a89" strokeDasharray="1 1" /><path d="M8 3V1H12" stroke="#dfe3e8" /></Svg></TrayItem>
            <TrayItem $w={22} aria-label="输入法帮助"><Svg w={17} h={17}><circle cx="8.500" cy="8.500" r="7.500" fill="#1420b8" stroke="#c8cfe2" /><text x="5" y="13" fontSize="12" fontWeight="700" fill="#fff" fontFamily="Open Sans">?</text></Svg></TrayItem>
            <TrayItem $w={24} aria-label="还原语言栏"><Svg w={10} h={20}><path d="M3.500 2.500V.5H9V4.500H7M1 2.500H6.500V6.500H1Z" stroke="#fff" /><path d="M2 14H8L5 17Z" fill="#fff" /></Svg></TrayItem>
            <TrayIcons>{trayIcons.map((ic, i) => <TrayItem key={i} aria-label={`通知 ${i + 1}`}>{ic}</TrayItem>)}</TrayIcons>
            <Clock>11:14<br />2018/3/9</Clock>
          </Tray>
          <ShowDesktop aria-label="显示桌面" />
        </TaskBar>
      </Screen>
    </>
  );
}
